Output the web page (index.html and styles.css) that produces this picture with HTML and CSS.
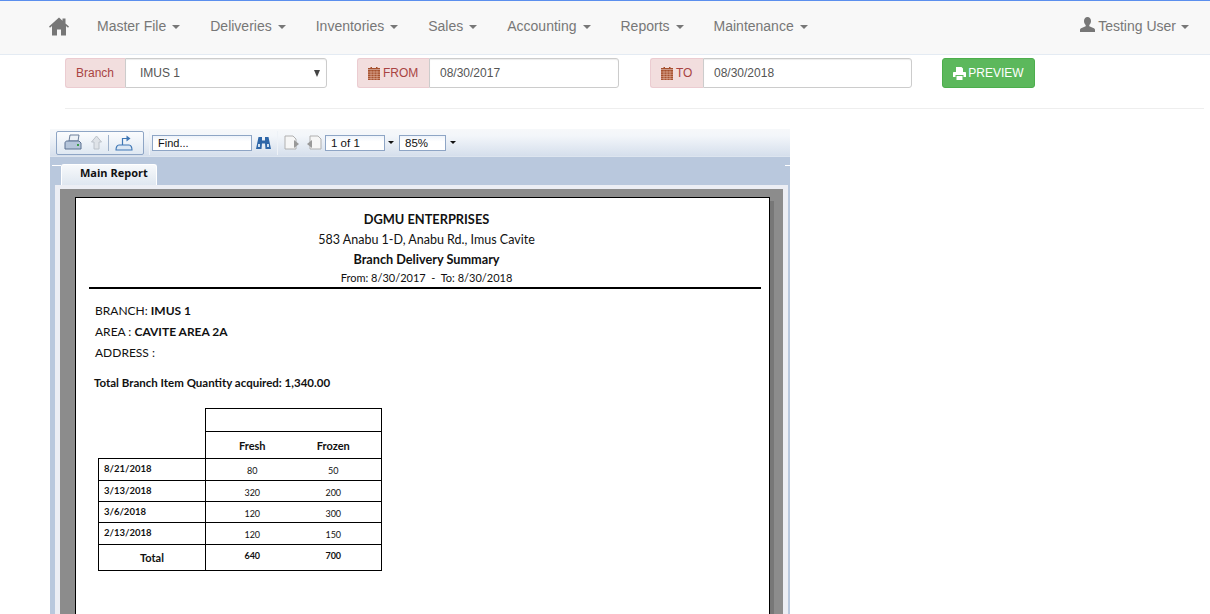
FILE: index.html
```html
<!DOCTYPE html>
<html lang="en">
<head>
<meta charset="utf-8">
<title>Branch Delivery Summary</title>
<link rel="stylesheet" href="styles.css">
</head>
<body>
<nav class="navbar">
  <a class="home"><svg width="20" height="19" viewBox="0 0 20 19"><path fill="#777" d="M10 .5 0 9.600l1 1.200L3 9v9.500h5v-6h4v6h5V9l2 1.800 1-1.200-3.500-3.200V1.500h-3v2.200z"/></svg></a>
  <ul class="menu">
    <li>Master File<i class="caret"></i></li>
    <li>Deliveries<i class="caret"></i></li>
    <li>Inventories<i class="caret"></i></li>
    <li>Sales<i class="caret"></i></li>
    <li>Accounting<i class="caret"></i></li>
    <li>Reports<i class="caret"></i></li>
    <li>Maintenance<i class="caret"></i></li>
  </ul>
  <div class="user"><svg width="15" height="15" viewBox="0 0 15 15"><path fill="#777" d="M7.500 0c2.200 0 3.500 1.700 3.500 4 0 1.700-.7 3.200-1.700 4v1.300l4 1.700c1 .4 1.700 1 1.700 2V15H0v-2c0-1 .7-1.600 1.700-2l4-1.700V8C4.700 7.200 4 5.700 4 4c0-2.300 1.300-4 3.500-4z"/></svg>Testing User<i class="caret"></i></div>
</nav>

<form class="filters">
  <div class="group branch">
    <span class="addon">Branch</span>
    <div class="field select">IMUS 1<i class="arrow"></i></div>
  </div>
  <div class="group from">
    <span class="addon"><svg class="cal" width="12" height="13" viewBox="0 0 12 13"><path fill="#a5502d" d="M0 3h12v10H0zM0 1h2.500V0h1.500v1h4V0h1.500v1H12v1.500H0z"/><path stroke="#e6b9a8" stroke-width=".6" fill="none" d="M0 5h12M0 7.300h12M0 9.600h12M0 11.600h12M3 3.500V13M6 3.500V13M9 3.500V13"/></svg>FROM</span>
    <div class="field">08/30/2017</div>
  </div>
  <div class="group to">
    <span class="addon"><svg class="cal" width="12" height="13" viewBox="0 0 12 13"><path fill="#a5502d" d="M0 3h12v10H0zM0 1h2.500V0h1.500v1h4V0h1.500v1H12v1.500H0z"/><path stroke="#e6b9a8" stroke-width=".6" fill="none" d="M0 5h12M0 7.300h12M0 9.600h12M0 11.600h12M3 3.500V13M6 3.500V13M9 3.500V13"/></svg>TO</span>
    <div class="field">08/30/2018</div>
  </div>
  <button class="preview" type="button"><svg width="13" height="13" viewBox="0 0 13 13"><path fill="#fff" d="M3 0h5.500L10 1.500V5H3zM0 6c0-.6.400-1 1-1h11c.6 0 1 .4 1 1v4h-2.500V8h-8v2H0zM3.500 9h6v4h-6z"/></svg>PREVIEW</button>
</form>
<hr class="rule">

<section class="viewer">
  <div class="toolbar">
    <div class="tool-box">
      <svg width="18" height="17" viewBox="0 0 18 17"><path fill="#eef2f7" stroke="#6c7f9a" d="M6 1h9l-1 6H5z"/><path fill="#b5c5da" stroke="#5a7091" d="M1 9c0-1 .8-2 2-2h12l2 2v6H1z"/><path fill="#3a9a4a" d="M13 10h2v2h-2z"/></svg>
      <svg class="up" width="13" height="15" viewBox="0 0 13 15"><path fill="#dfe3e8" stroke="#bcc2ca" d="M6.500 1l5 6H9v7H4V7H1.500z"/></svg>
      <span class="tool-sep"></span>
      <svg width="18" height="16" viewBox="0 0 18 16"><path fill="#dbe7f4" stroke="#3f77b5" stroke-width="1.100" d="M1 15h16c0-3-1.200-5-3-5H4c-1.800 0-3 2-3 5z"/><path fill="none" stroke="#3f77b5" stroke-width="1.200" d="M7.500 10V3.500h5"/><path fill="#3f77b5" d="M11.500.5l4 3-4 3z"/></svg>
    </div>
    <div class="tool-div"></div>
    <div class="find">Find...</div>
    <svg class="binoc" width="15" height="14" viewBox="0 0 15 14"><path fill="#2e66a8" d="M2.500 1h3.500v3.500h3V1h3.500L15 13h-5.500L9 7.500H6L5.500 13H0z"/><path fill="#cfe0f2" d="M2 8h2v3H2zM11 8h2v3h-2z"/></svg>
    <div class="tool-div second"></div>
    <svg class="page-ic next" width="17" height="15" viewBox="0 0 17 15"><path fill="#f6f6f6" stroke="#b0b0b0" d="M1 1h8l3 3v10H1z"/><path fill="#999" d="M10 5l5 4-5 4z"/></svg>
    <svg class="page-ic prev" width="17" height="15" viewBox="0 0 17 15"><path fill="#f6f6f6" stroke="#b0b0b0" d="M5 1h8l3 3v10H5z"/><path fill="#999" d="M7 5 2 9l5 4z"/></svg>
    <div class="pager">1 of 1</div><i class="drop"></i>
    <div class="zoom-box">85%</div><i class="drop last"></i>
  </div>
  <div class="tabs"><div class="tab">Main Report</div></div>
  <div class="frame">
    <div class="canvas">
      <article class="page">
        <header class="head">
          <h1>DGMU ENTERPRISES</h1>
          <p class="addr">583 Anabu 1-D, Anabu Rd., Imus Cavite</p>
          <h2>Branch Delivery Summary</h2>
          <p class="range">From: 8/30/2017&nbsp; -&nbsp; To: 8/30/2018</p>
        </header>
        <div class="meta">
          <p>BRANCH: <b>IMUS 1</b></p>
          <p>AREA : <b>CAVITE AREA 2A</b></p>
          <p>ADDRESS :</p>
        </div>
        <p class="total">Total Branch Item Quantity acquired: 1,340.00</p>
        <table class="grid">
          <colgroup><col class="c1"><col class="c2"><col class="c3"></colgroup>
          <tr class="r-top"><td class="blank" rowspan="2"></td><td class="left top" colspan="2"></td></tr>
          <tr class="r-head"><th class="left">Fresh</th><th class="third">Frozen</th></tr>
          <tr class="r1"><td class="date">8/21/2018</td><td class="left num">80</td><td class="num third">50</td></tr>
          <tr class="r2"><td class="date">3/13/2018</td><td class="left num">320</td><td class="num third">200</td></tr>
          <tr class="r2"><td class="date">3/6/2018</td><td class="left num">120</td><td class="num third">300</td></tr>
          <tr class="r1"><td class="date">2/13/2018</td><td class="left num">120</td><td class="num third">150</td></tr>
          <tr class="r-total"><td class="label">Total</td><td class="left sum">640</td><td class="sum third">700</td></tr>
        </table>
      </article>
    </div>
  </div>
</section>
</body>
</html>
```

FILE: styles.css
```css
* { box-sizing: border-box; }
html, body { margin: 0; height: 614px; overflow: hidden; background: #fff; }
body { font-family: "Liberation Sans", Arial, sans-serif; font-size: 14px; color: #555; }

.navbar { display: flex; align-items: center; height: 55px; padding: 0 21px 4px 49px; background: #f8f8f8; border-top: 1px solid #5b8fee; border-bottom: 1px solid #e4ebf3; }
.home { display: flex; width: 20px; height: 19px; margin: 1px 28px 0 0; }
.menu { display: flex; gap: 30px; margin: 0; padding: 0; list-style: none; color: #777; }
.caret, .drop { display: inline-block; width: 0; height: 0; border-left: 4px solid transparent; border-right: 4px solid transparent; border-top: 4px solid #777; }
.caret { margin-left: 6px; vertical-align: 2px; }
.user { display: flex; align-items: center; margin-left: auto; color: #777; }
.user svg { margin-right: 3px; margin-top: -3px; }
.user .caret { margin-top: 2px; margin-left: 5px; }

.filters { display: flex; height: 30px; margin: 3px 0 0 65px; }
.group { display: flex; height: 30px; }
.branch { width: 262px; margin-right: 30px; }
.from { width: 262px; margin-right: 31px; }
.to { width: 262px; margin-right: 30px; }
.addon { display: flex; align-items: center; flex: none; padding: 0 10px; color: #a94442; background: #f2dede; border: 1px solid #ebccd1; border-right: 0; border-radius: 3px 0 0 3px; font-size: 12px; }
.branch .addon { width: 60px; }
.from .addon { width: 72px; }
.to .addon { width: 53px; }
.cal { margin-right: 3px; }
.field { position: relative; flex: 1; display: flex; align-items: center; padding: 0 10px; font-size: 12px; color: #555; background: #fff; border: 1px solid #ccc; border-radius: 0 3px 3px 0; box-shadow: inset 0 1px 1px rgba(0,0,0,.075); }
.select { padding-left: 14px; }
.arrow { position: absolute; right: 6px; top: 11px; width: 0; height: 0; border-left: 3.500px solid transparent; border-right: 3.500px solid transparent; border-top: 7px solid #444; }
.preview { display: flex; align-items: center; justify-content: center; gap: 2px; width: 93px; height: 30px; padding: 0; color: #fff; font: 12px "Liberation Sans", Arial, sans-serif; background: #5cb85c; border: 1px solid #4cae4c; border-radius: 3px; }

.rule { height: 1px; margin: 20px 6px 20px 65px; border: 0; background: #eee; }

.viewer { width: 740px; height: 485px; margin-left: 50px; background: #b9c8dd; overflow: hidden; }
.toolbar { display: flex; align-items: center; height: 28px; padding-left: 6px; background: linear-gradient(#f6f8fa, #f3f6fa 25%, #d5dfec); border-bottom: 1px solid #dde5ef; font-size: 11.500px; color: #111; }
.tool-box { display: flex; align-items: center; width: 88px; height: 24px; padding-left: 7px; border: 1px solid #8ea5c5; border-radius: 2px; background: linear-gradient(#fbfcfe, #dfe8f2); }
.up { margin-left: 8px; }
.tool-sep { width: 1px; height: 16px; margin: 0 6px 0 5px; background: #9fb2cb; }
.tool-div { width: 1px; height: 24px; margin: 0 2px 0 5px; background: #eef2f7; }
.tool-div.second { margin: 0 6px 0 6px; }
.find, .pager, .zoom-box { height: 16px; line-height: 14px; padding-left: 5px; background: linear-gradient(#eef3fa, #fff 40%); border: 1px solid #8ea5c5; }
.find { width: 100px; margin-right: 3px; font-size: 11px; }
.pager { width: 60px; }
.zoom-box { width: 47px; }
.drop { margin: 0 5px 0 3px; border-left-width: 3px; border-right-width: 3px; border-top: 3px solid #111; }
.drop.last { margin-left: 4px; }
.binoc { margin-left: 1px; }
.next { margin-right: 4px; }
.prev { margin-right: 3px; }

.tabs { position: relative; height: 28px; padding: 7px 0 0 11px; }
.tabs::before, .tabs::after { content: ""; position: absolute; top: 8px; height: 1px; background: #fff; }
.tabs::before { left: 2px; width: 9px; }
.tabs::after { right: 0; width: 5px; }
.tab { width: 96px; height: 21px; padding: 1px 0 0 18px; font: 700 11px/14px "Open Sans", sans-serif; color: #111; background: linear-gradient(#f7f9fb, #dfe7f0); border: 1px solid #fff; border-bottom: 0; border-radius: 3px 3px 0 0; }

.frame { height: 100%; margin: 0 2px 0 5px; border: 4px solid #eceef4; border-width: 4px 5px 0; background: #8c8c8c; }
.canvas { height: 100%; padding: 8px 13px 0 15px; background: #8c8c8c; }
.page { height: 500px; padding: 11px 8px 0 13px; background: #fff; border: 1px solid #000; box-shadow: 4px 4px 0 #777; font-family: Lato, "Open Sans", sans-serif; color: #111; }

.head { padding-left: 3px; text-align: center; border-bottom: 2px solid #000; }
.head h1, .head h2, .head p { margin: 0; }
.head h1 { font-size: 12.800px; line-height: 20px; font-weight: 700; }
.addr { font-size: 12.500px; line-height: 21px; }
.head h2 { font-size: 12.700px; line-height: 19px; font-weight: 700; }
.range { font-size: 11px; line-height: 18px; }

.meta { padding: 11px 0 0 6px; font-size: 12px; line-height: 21px; }
.meta p { margin: 0; }
.total { margin: 12px 0 0 5px; font-size: 11.500px; line-height: 16px; font-weight: 700; }

.grid { width: 283px; margin: 17px 0 0 9px; border-collapse: collapse; table-layout: fixed; font-size: 9px; }
.grid td, .grid th { padding: 0; border-top: 1px solid #000; text-align: center; }
.c1 { width: 107px; } .c2 { width: 93px; } .c3 { width: 83px; }
.r-top { height: 23px; }
.r-head { height: 27px; }
.r-head th { font-size: 11px; font-weight: 700; }
.r1 { height: 22px; }
.r2 { height: 21px; }
.r-total { height: 26px; }
.grid .blank { border-top: 0; }
.grid .top, .grid .left { border-left: 1px solid #000; }
.grid .top { border-right: 1px solid #000; }
.grid tr > :last-child { border-right: 1px solid #000; }
.grid .blank { border-right: 0; }
.grid .date, .grid .label { border-left: 1px solid #000; }
.grid .date { text-align: left; padding-left: 5px; font-size: 9.500px; font-weight: 700; vertical-align: top; padding-top: 4px; }
.grid .label { font-size: 11px; font-weight: 700; }
.grid .num { padding-top: 2px; }
.grid .third { padding-right: 13px; }
.grid .sum { font-weight: 700; padding-bottom: 5px; }
.r-total td { border-bottom: 1px solid #000; }
```
